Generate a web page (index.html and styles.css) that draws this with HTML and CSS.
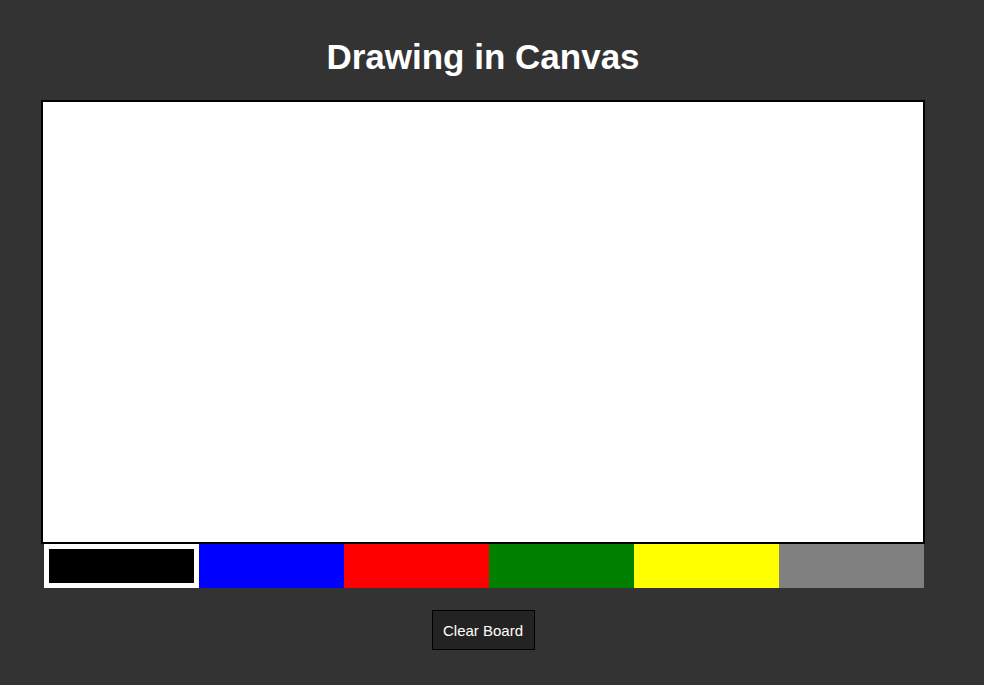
FILE: index.html
```html
<!DOCTYPE html>
<html>
<head>
<meta charset="utf-8">
<title>Drawing in Canvas</title>
<link rel="stylesheet" href="styles.css">
</head>
<body>
<div class="page">
  <h1 class="title">Drawing in Canvas</h1>
  <div class="board"></div>
  <div class="swatches">
    <div class="swatch black selected"></div>
    <div class="swatch blue"></div>
    <div class="swatch red"></div>
    <div class="swatch green"></div>
    <div class="swatch yellow"></div>
    <div class="swatch gray"></div>
  </div>
  <button class="clear">Clear Board</button>
</div>
</body>
</html>
```
FILE: styles.css
```css
html, body {
  margin: 0;
  padding: 0;
  background: #333333;
}
body {
  font-family: "Liberation Sans", Arial, sans-serif;
  color: #fff;
  overflow: hidden;
}
.page {
  width: 966px;
  display: flex;
  flex-direction: column;
  align-items: center;
}
.title {
  margin: 37px 0 23px;
  font-size: 35px;
  line-height: 40px;
  font-weight: bold;
  color: #fff;
}
.board {
  width: 880px;
  height: 440px;
  background: #fff;
  border: 2px solid #000;
}
.swatches {
  display: flex;
  width: 880px;
  margin-left: 2px;
}
.swatch {
  width: 145px;
  height: 44px;
}
.swatch.selected {
  height: 34px;
  border: 5px solid #fff;
}
.black { background: #000; }
.blue { background: #0000ff; }
.red { background: #ff0000; }
.green { background: #008000; }
.yellow { background: #ffff00; }
.gray { background: #808080; }
.clear {
  margin-top: 22px;
  width: 103px;
  height: 40px;
  padding: 0;
  background: #232323;
  color: #fff;
  border: 1px solid #000;
  font-family: "Liberation Sans", Arial, sans-serif;
  font-size: 15px;
}
```
